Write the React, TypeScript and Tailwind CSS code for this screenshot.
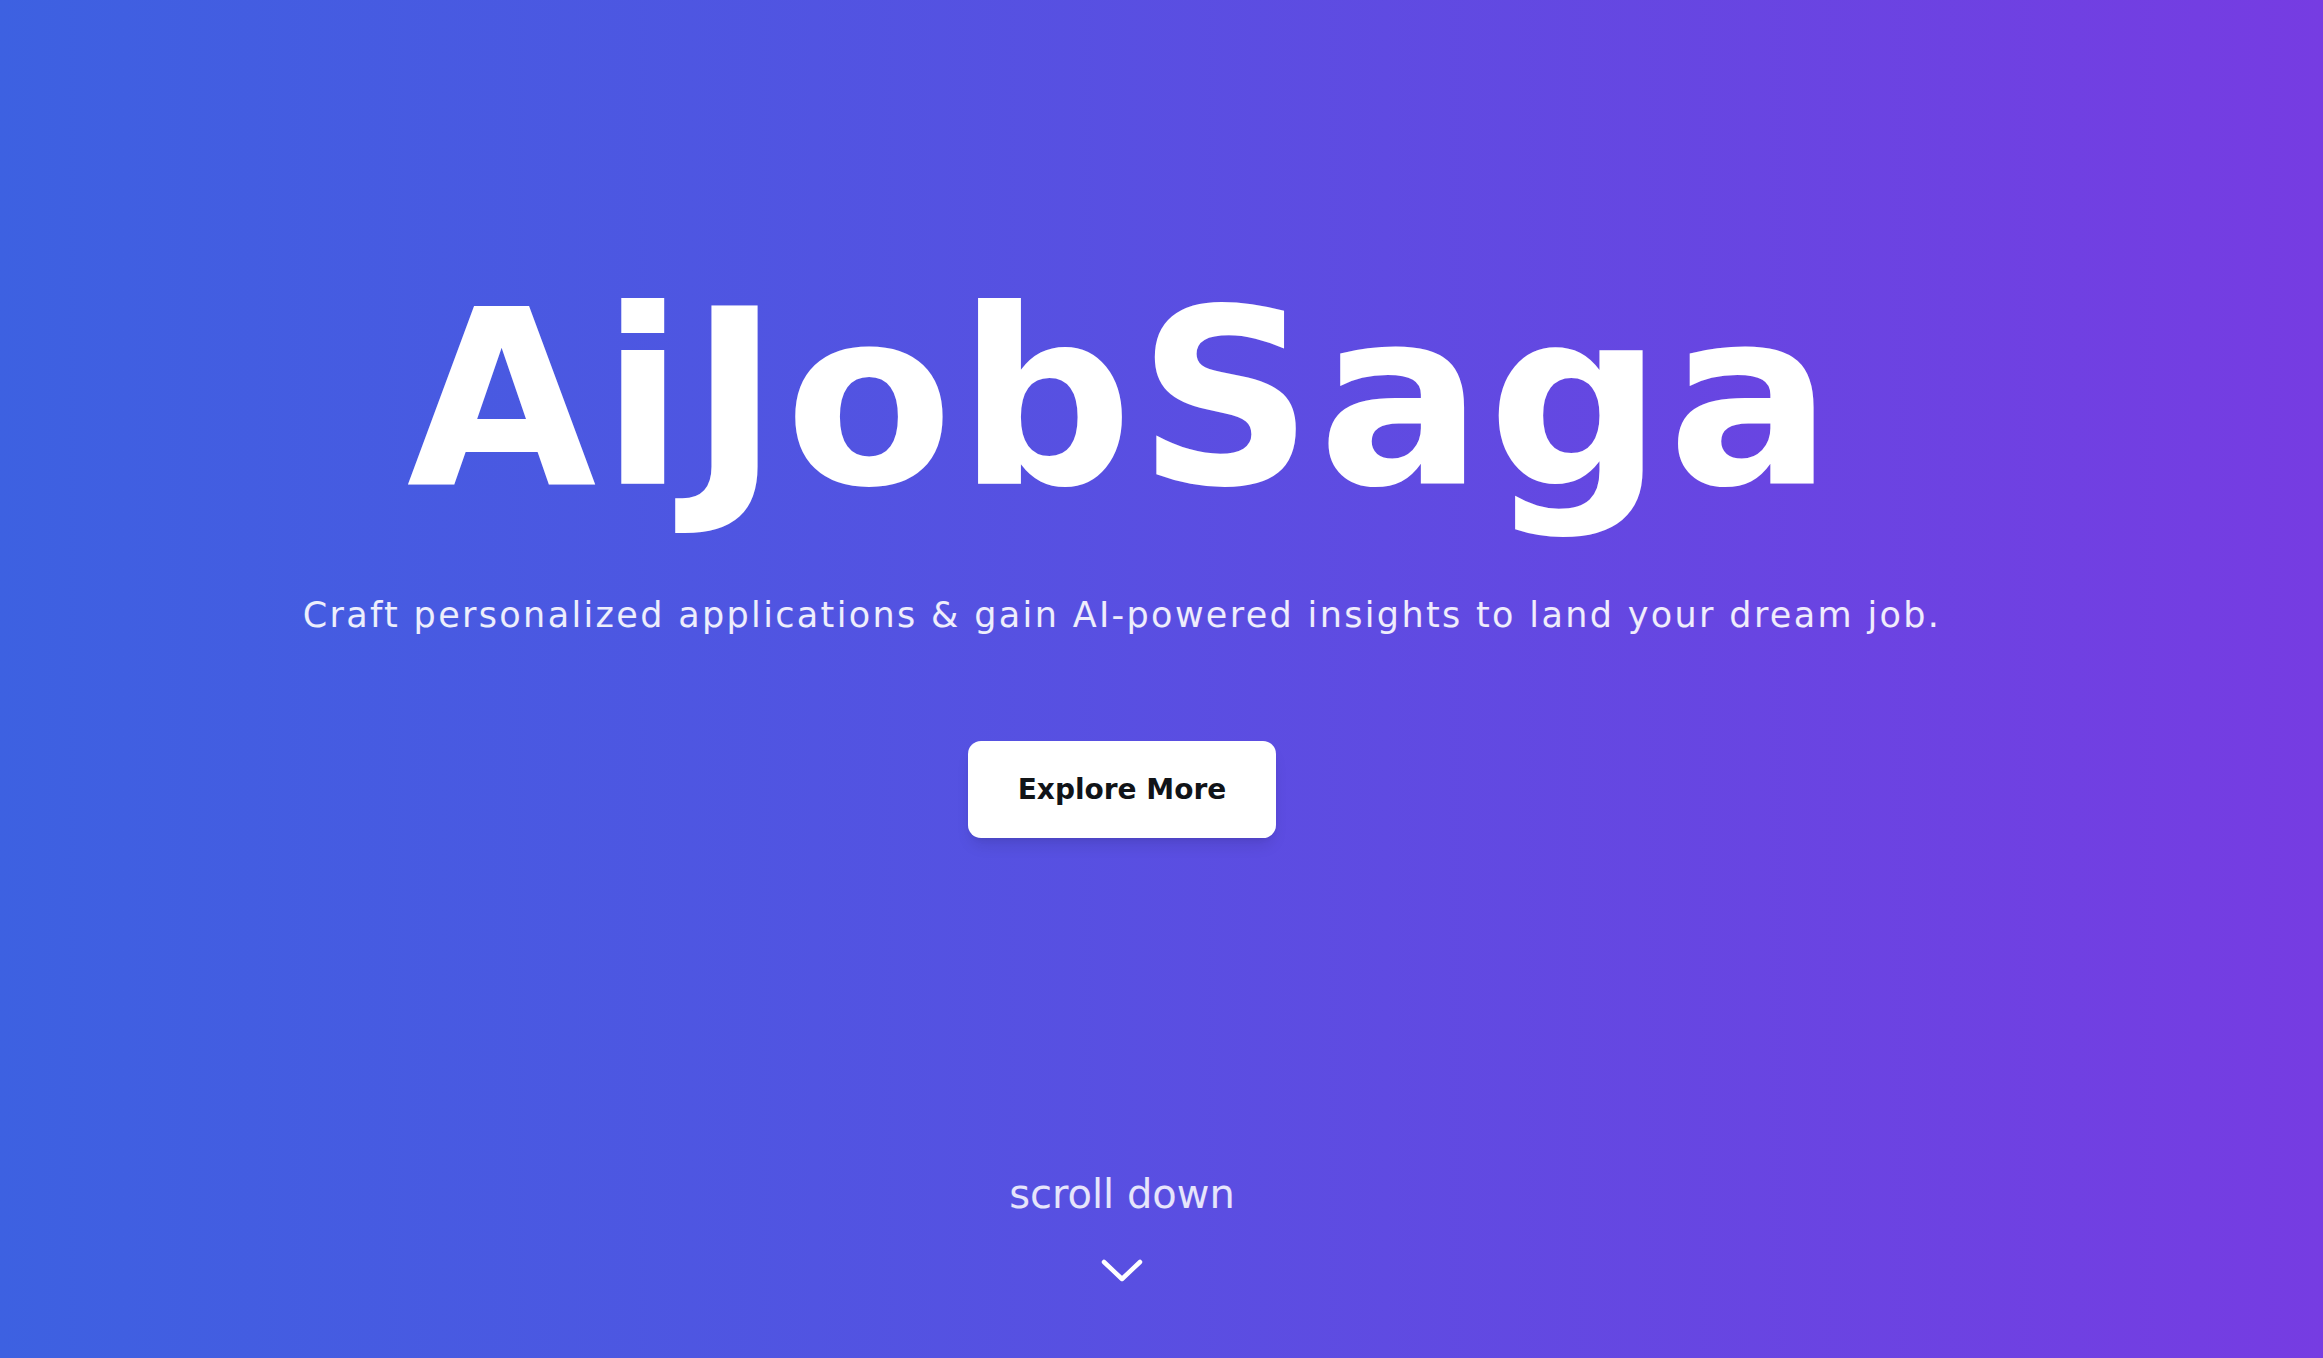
import React from "react";

export default function App() {
  return (
    <div className="w-full h-[1358px] bg-linear-to-r/srgb from-[#3d61e1] to-[#763ce2] flex flex-col items-center pr-[79px] overflow-hidden font-['DejaVu_Sans',sans-serif]">
      <h1 className="mt-[277px] text-white font-bold text-[245px] leading-none tracking-[0.018em]">
        AiJobSaga
      </h1>
      <p className="mt-[76px] text-white/90 text-[35px] leading-none tracking-[0.067em]">
        Craft personalized applications &amp; gain AI-powered insights to land your dream job.
      </p>
      <button className="mt-[108px] w-[308px] h-[97px] bg-white rounded-[13px] shadow-lg text-[#111418] font-bold text-[28px]">
        Explore More
      </button>
      <div className="mt-auto mb-[74px] flex flex-col items-center">
        <span className="text-white/85 text-[40px] leading-none">scroll down</span>
        <svg className="mt-[44px]" width="44" height="26" viewBox="0 0 44 26" fill="none">
          <path d="M4 4 L22 21 L40 4" stroke="white" strokeWidth="4.5" strokeLinecap="round" strokeLinejoin="round" />
        </svg>
      </div>
    </div>
  );
}
